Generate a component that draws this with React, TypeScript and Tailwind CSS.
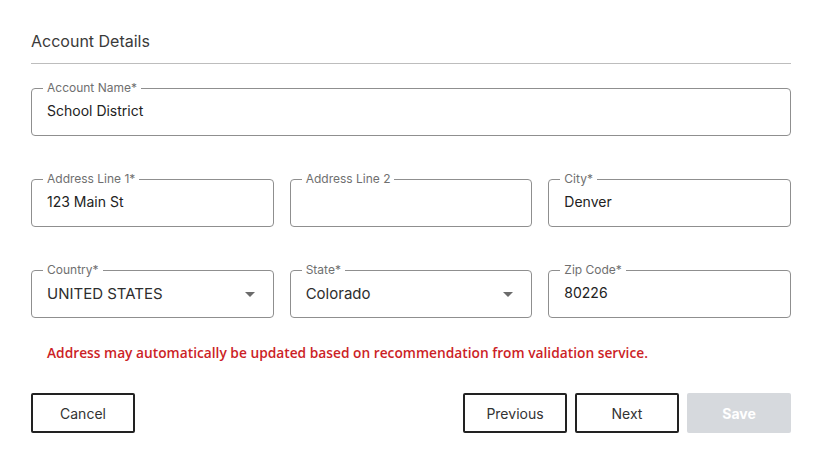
import React from 'react';

type FieldProps = {
  label: string;
  value?: string;
  select?: boolean;
};

function Field({ label, value = '', select }: FieldProps) {
  return (
    <div className="relative h-[48px] rounded-[4px] border border-[#8f8f8f] flex items-center pl-[15px] pr-[18px] pb-[3px]">
      {/* Notched label */}
      <span className="absolute -top-[8px] left-[11px] bg-white px-[4px] text-[12px] leading-[14px] text-[#6f6f6f]">
        {label}
      </span>
      <span className={select ? 'flex-1 text-[15px] text-[#2e2e2e] pt-[3px]' : 'flex-1 text-[14px] text-[#222]'}>{value}</span>
      {select && (
        <svg width="10" height="5" viewBox="0 0 10 5" className="text-[#6b6b6b] mt-[3px]">
          <path d="M0 0h10L5 5z" fill="currentColor" />
        </svg>
      )}
    </div>
  );
}

export default function App() {
  return (
    <div className="w-[822px] h-[464px] bg-white px-[31px] pt-[30px]" style={{ fontFamily: 'Inter, "Open Sans", sans-serif' }}>
      <div className="border-b border-[#bdbdbd] pb-[11px]">
        <h2 className="text-[16px] leading-[22px] text-[#3a3a3a]">Account Details</h2>
      </div>

      <div className="mt-[24px]">
        <Field label="Account Name*" value="School District" />
      </div>

      <div className="mt-[43px] grid grid-cols-3 gap-x-[16px] gap-y-[43px]">
        <Field label="Address Line 1*" value="123 Main St" />
        <Field label="Address Line 2" />
        <Field label="City*" value="Denver" />
        <Field label="Country*" value="UNITED STATES" select />
        <Field label="State*" value="Colorado" select />
        <Field label="Zip Code*" value="80226" />
      </div>

      <p
        className="mt-[26px] pl-[16px] text-[13.75px] leading-[18px] font-semibold text-[#cc1f27]"
        style={{ fontFamily: '"Open Sans", sans-serif' }}
      >
        Address may automatically be updated based on recommendation from validation service.
      </p>

      <div className="mt-[31px] flex items-center">
        <button className="w-[104px] h-[40px] border-2 border-[#222] rounded-[2px] text-[14px] text-[#333]">Cancel</button>
        <div className="ml-auto flex gap-[8px]">
          <button className="w-[104px] h-[40px] border-2 border-[#222] rounded-[2px] text-[14px] text-[#333]">Previous</button>
          <button className="w-[104px] h-[40px] border-2 border-[#222] rounded-[2px] text-[14px] text-[#333]">Next</button>
          <button className="w-[104px] h-[40px] rounded-[2px] bg-[#d6d9dd] text-[14px] font-bold text-white">Save</button>
        </div>
      </div>
    </div>
  );
}
